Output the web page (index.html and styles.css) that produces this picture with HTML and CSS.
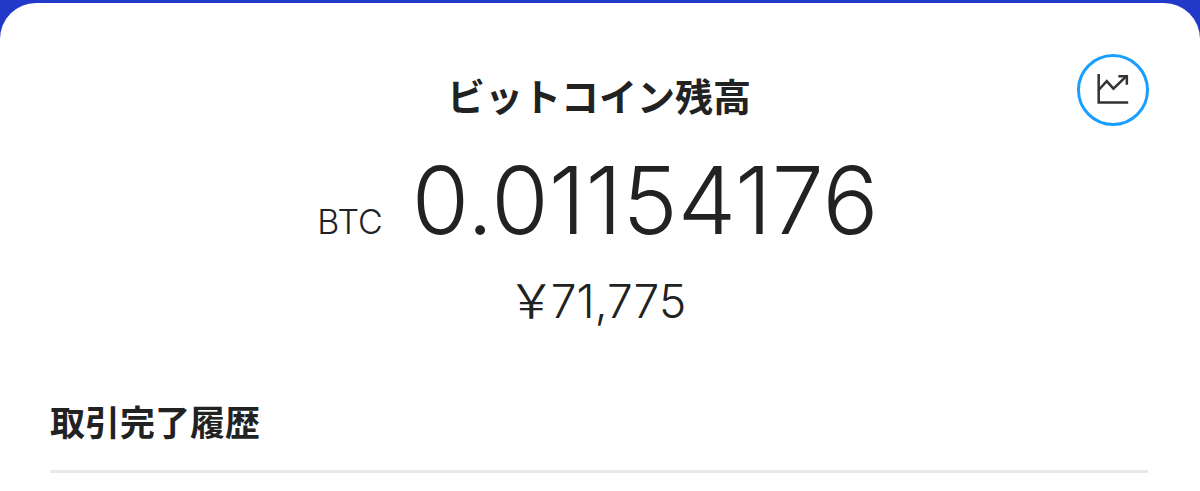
FILE: index.html
```html
<!DOCTYPE html>
<html lang="ja"><head>
  <meta name="viewport" content="width=device-width, initial-scale=1.0">
  <title>ビットコイン残高</title>
  <link rel="stylesheet" href="styles.css">
</head>
<body>
  <div class="card">
    <!-- Balance -->
    <div class="balance-head">
      <h2 class="balance-title">ビットコイン残高</h2>
      <a class="chart-btn">
        <svg width="34" height="34" viewBox="0 0 38 38" fill="none" stroke="#333" stroke-width="2.800">
          <path d="M3 1V33H36"/>
          <path d="M3 19L12 9L19.500 17.500L34 3.500"/>
          <path d="M25 3.500H34.500V13"/>
        </svg>
      </a>
    </div>
    <div class="balance-row">
      <span class="unit">BTC</span>
      <span class="amount">0.01154176</span>
    </div>
    <div class="fiat"><span class="yen">￥</span>71,775</div>

    <!-- History -->
    <h3 class="history-title">取引完了履歴</h3>
    <div class="divider"></div>
  </div>
</body>
</html>
```

FILE: styles.css
```css
html, body {
  margin: 0;
  height: 100%;
  overflow: hidden;
}
body {
  font-family: Inter, "Noto Sans CJK JP", sans-serif;
  background: #2238c8;
  color: #222;
  padding-top: 3px;
  box-sizing: border-box;
}
.card {
  background: white;
  height: 100%;
  border-radius: 36px 36px 0 0;
  padding: 0 52px 0 50px;
}
.balance-head {
  position: relative;
  text-align: center;
  padding-top: 67px;
}
.balance-title {
  margin: 0;
  font-size: 38px;
  line-height: 50px;
  font-weight: 700;
  font-family: "Noto Sans CJK JP", sans-serif;
}
.chart-btn {
  position: absolute;
  right: -1px;
  top: 51px;
  width: 72px;
  height: 72px;
  border: 3px solid #1a9fff;
  border-radius: 50%;
  box-sizing: border-box;
  display: flex;
  align-items: center;
  justify-content: center;
}
.balance-row {
  display: flex;
  justify-content: center;
  align-items: baseline;
  gap: 29px;
  margin-top: 26px;
  padding-right: 2px;
}
.unit {
  font-size: 34px;
  font-weight: 300;
}
.amount {
  font-size: 93px;
  line-height: 108px;
  font-weight: 300;
  letter-spacing: 0.2px;
}
.fiat {
  text-align: center;
  font-size: 46px;
  line-height: 56px;
  margin-top: 19px;
  padding-right: 4px;
  font-weight: 350;
}
.yen {
  font-size: 47px;
  letter-spacing: -4px;
}
.history-title {
  margin: 70px 0 0;
  font-size: 35px;
  line-height: 44px;
  font-weight: 700;
  font-family: "Noto Sans CJK JP", sans-serif;
}
.divider {
  height: 3px;
  background: #e8eaea;
  margin-top: 27px;
}
```
